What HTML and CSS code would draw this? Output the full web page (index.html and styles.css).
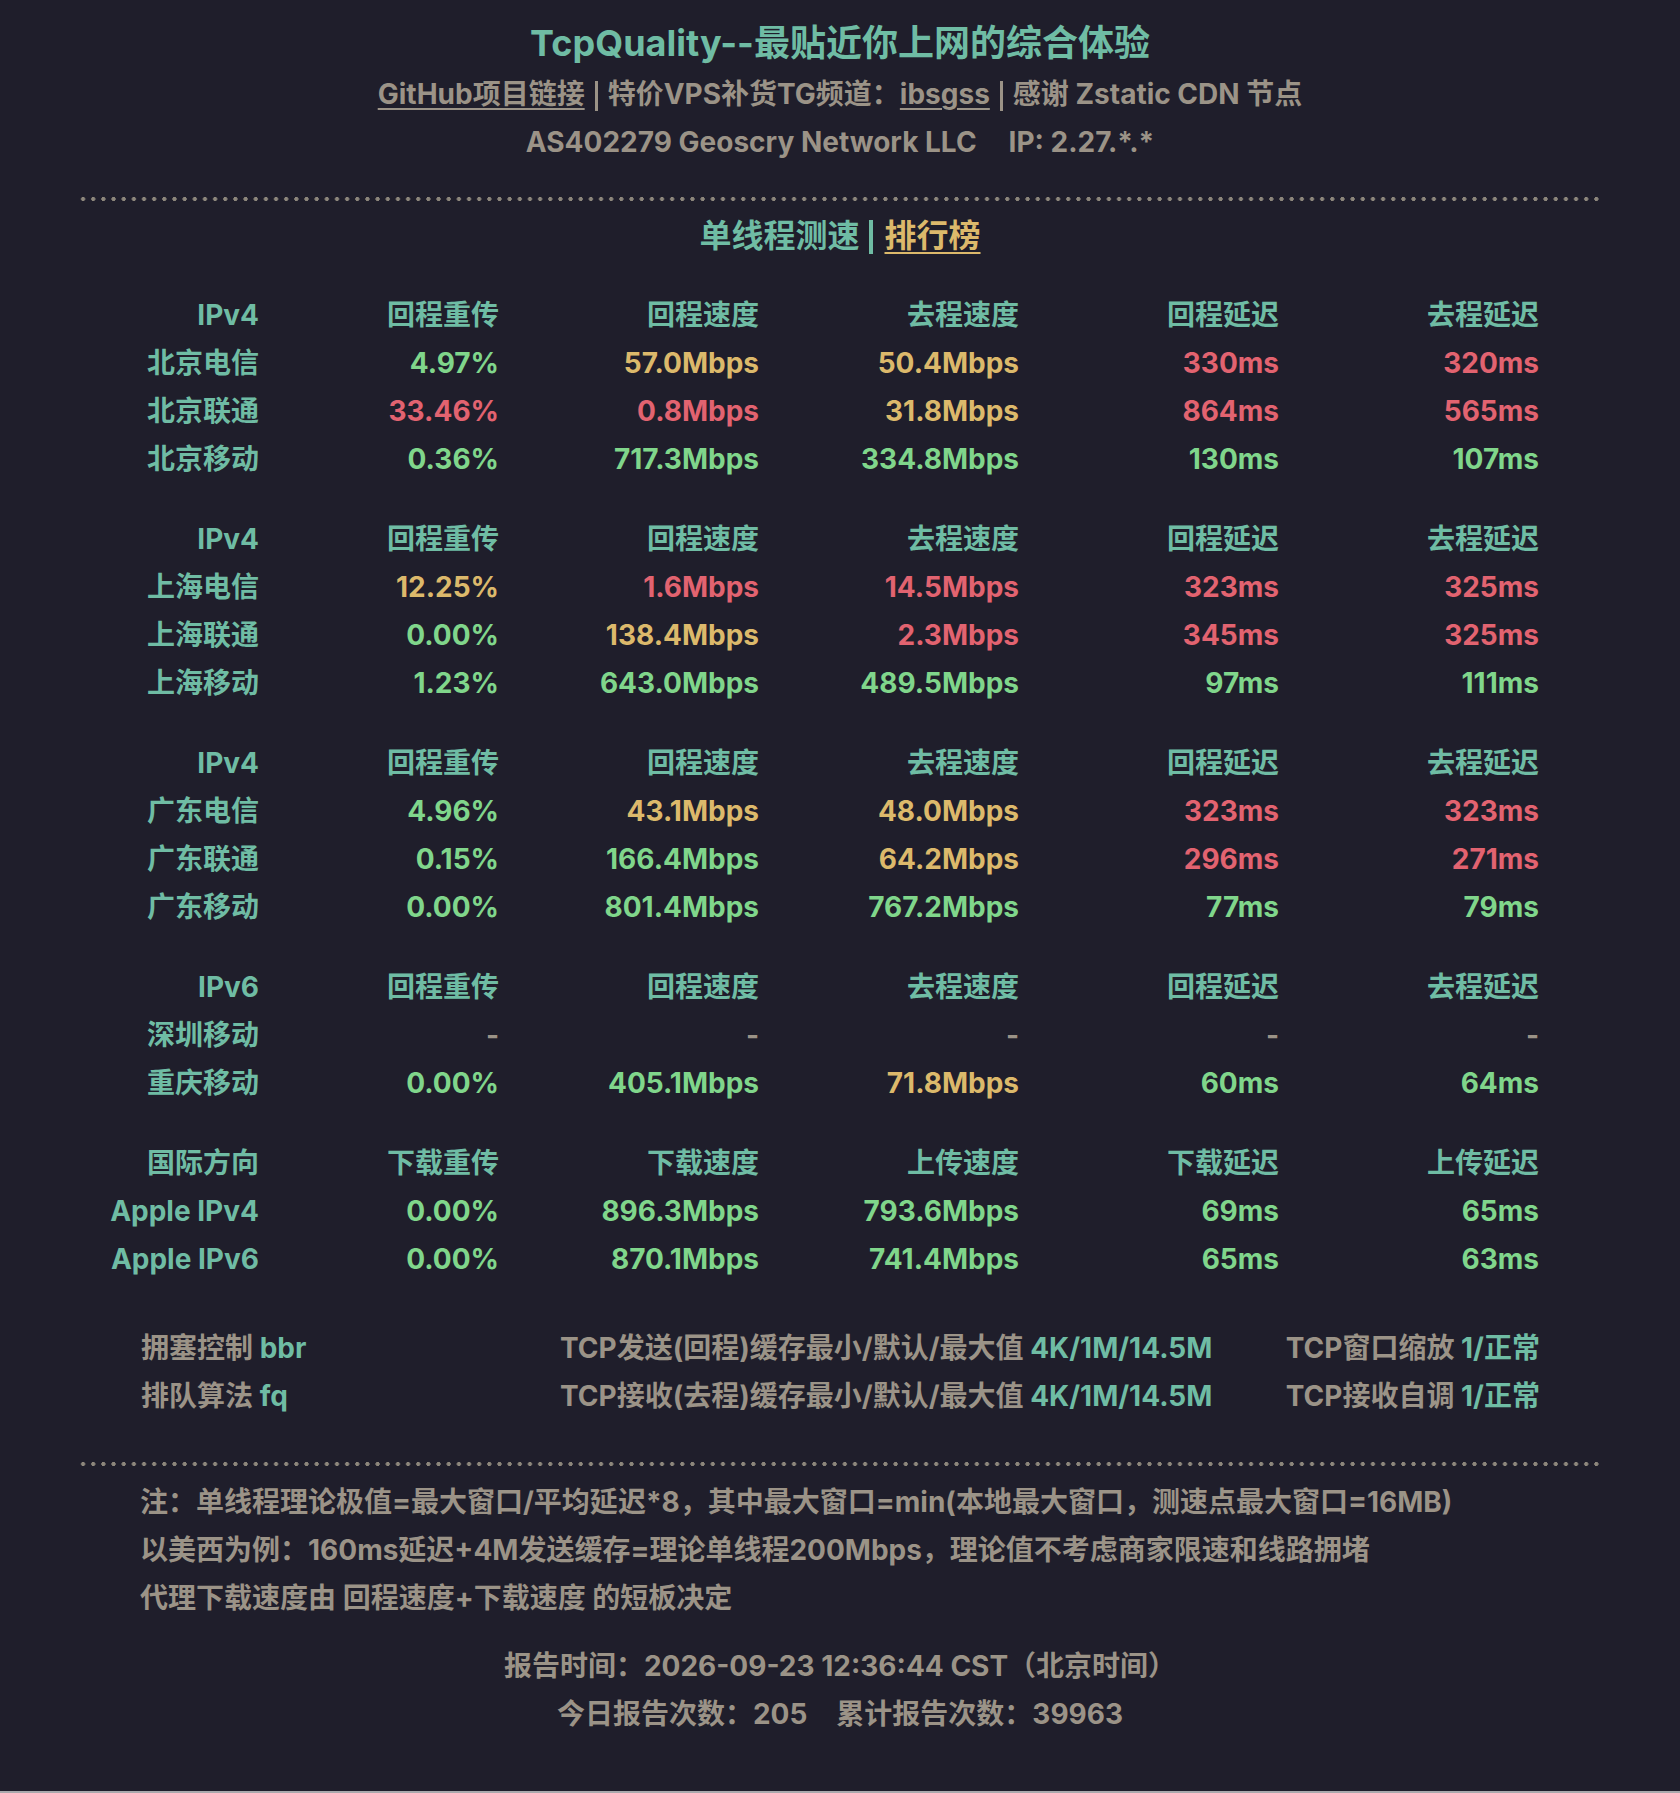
FILE: index.html
```html
<!DOCTYPE html>
<html lang="zh-CN">
<head>
<meta charset="utf-8">
<title>TcpQuality</title>
<link rel="stylesheet" href="styles.css">
</head>
<body>
<div class="page">
  <header class="head">
    <h1 class="title">TcpQuality--最贴近你上网的综合体验</h1>
    <p class="sub"><a class="link" href="#">GitHub项目链接</a><span class="bar"></span>特价VPS补货TG频道：<a class="link" href="#">ibsgss</a><span class="bar"></span>感谢 Zstatic CDN 节点</p>
    <p class="sub">AS402279 Geoscry Network LLC<span class="gap"></span>IP: 2.27.*.*</p>
  </header>

  <div class="dots"></div>

  <div class="tabs"><span>单线程测速</span><span class="tbar"></span><a class="rank" href="#">排行榜</a></div>

  <div class="grid">
    <div class="h">IPv4</div><div class="h">回程重传</div><div class="h">回程速度</div><div class="h">去程速度</div><div class="h">回程延迟</div><div class="h">去程延迟</div>
    <div class="n">北京电信</div><div class="g">4.97%</div><div class="y">57.0Mbps</div><div class="y">50.4Mbps</div><div class="r">330ms</div><div class="r">320ms</div>
    <div class="n">北京联通</div><div class="r">33.46%</div><div class="r">0.8Mbps</div><div class="y">31.8Mbps</div><div class="r">864ms</div><div class="r">565ms</div>
    <div class="n">北京移动</div><div class="g">0.36%</div><div class="g">717.3Mbps</div><div class="g">334.8Mbps</div><div class="g">130ms</div><div class="g">107ms</div>
  </div>

  <div class="grid">
    <div class="h">IPv4</div><div class="h">回程重传</div><div class="h">回程速度</div><div class="h">去程速度</div><div class="h">回程延迟</div><div class="h">去程延迟</div>
    <div class="n">上海电信</div><div class="y">12.25%</div><div class="r">1.6Mbps</div><div class="r">14.5Mbps</div><div class="r">323ms</div><div class="r">325ms</div>
    <div class="n">上海联通</div><div class="g">0.00%</div><div class="y">138.4Mbps</div><div class="r">2.3Mbps</div><div class="r">345ms</div><div class="r">325ms</div>
    <div class="n">上海移动</div><div class="g">1.23%</div><div class="g">643.0Mbps</div><div class="g">489.5Mbps</div><div class="g">97ms</div><div class="g">111ms</div>
  </div>

  <div class="grid">
    <div class="h">IPv4</div><div class="h">回程重传</div><div class="h">回程速度</div><div class="h">去程速度</div><div class="h">回程延迟</div><div class="h">去程延迟</div>
    <div class="n">广东电信</div><div class="g">4.96%</div><div class="y">43.1Mbps</div><div class="y">48.0Mbps</div><div class="r">323ms</div><div class="r">323ms</div>
    <div class="n">广东联通</div><div class="g">0.15%</div><div class="g">166.4Mbps</div><div class="y">64.2Mbps</div><div class="r">296ms</div><div class="r">271ms</div>
    <div class="n">广东移动</div><div class="g">0.00%</div><div class="g">801.4Mbps</div><div class="g">767.2Mbps</div><div class="g">77ms</div><div class="g">79ms</div>
  </div>

  <div class="grid">
    <div class="h">IPv6</div><div class="h">回程重传</div><div class="h">回程速度</div><div class="h">去程速度</div><div class="h">回程延迟</div><div class="h">去程延迟</div>
    <div class="n">深圳移动</div><div class="d">-</div><div class="d">-</div><div class="d">-</div><div class="d">-</div><div class="d">-</div>
    <div class="n">重庆移动</div><div class="g">0.00%</div><div class="g">405.1Mbps</div><div class="y">71.8Mbps</div><div class="g">60ms</div><div class="g">64ms</div>
  </div>

  <div class="grid">
    <div class="h">国际方向</div><div class="h">下载重传</div><div class="h">下载速度</div><div class="h">上传速度</div><div class="h">下载延迟</div><div class="h">上传延迟</div>
    <div class="n">Apple IPv4</div><div class="g">0.00%</div><div class="g">896.3Mbps</div><div class="g">793.6Mbps</div><div class="g">69ms</div><div class="g">65ms</div>
    <div class="n">Apple IPv6</div><div class="g">0.00%</div><div class="g">870.1Mbps</div><div class="g">741.4Mbps</div><div class="g">65ms</div><div class="g">63ms</div>
  </div>

  <div class="info">
    <div>拥塞控制 <span class="v">bbr</span></div>
    <div>TCP发送(回程)缓存最小/默认/最大值 <span class="v">4K/1M/14.5M</span></div>
    <div class="end">TCP窗口缩放 <span class="v">1/正常</span></div>
    <div>排队算法 <span class="v">fq</span></div>
    <div>TCP接收(去程)缓存最小/默认/最大值 <span class="v">4K/1M/14.5M</span></div>
    <div class="end">TCP接收自调 <span class="v">1/正常</span></div>
  </div>

  <div class="dots dots2"></div>

  <div class="notes">
    <p>注：单线程理论极值=最大窗口/平均延迟*8，其中最大窗口=min(本地最大窗口，测速点最大窗口=16MB)</p>
    <p>以美西为例：160ms延迟+4M发送缓存=理论单线程200Mbps，理论值不考虑商家限速和线路拥堵</p>
    <p>代理下载速度由 回程速度+下载速度 的短板决定</p>
  </div>

  <div class="report">
    <p>报告时间：2026-09-23 12:36:44 CST（北京时间）</p>
    <p>今日报告次数：205<span class="gap2"></span>累计报告次数：39963</p>
  </div>
</div>
</body>
</html>
```
FILE: styles.css
```css
html {
  background: #a9a9ad;
}
body {
  margin: 0;
  font-family: "Inter", "Noto Sans CJK SC", sans-serif;
  font-weight: 650;
  color: #9b9387;
}
.page {
  background: #1f1e2b;
  height: 1791px;
  box-sizing: border-box;
  padding: 16px 78px 0;
}
.head {
  text-align: center;
}
.title {
  margin: 0;
  font-size: 36px;
  line-height: 54px;
  font-weight: 650;
  color: #6fbca4;
}
.sub {
  margin: 0;
  font-size: 28px;
  line-height: 48px;
  color: #9b9387;
}
.link {
  color: #9b9387;
  text-decoration: underline;
  text-decoration-thickness: 2px;
  text-underline-offset: 4px;
}
.bar {
  display: inline-block;
  width: 3px;
  height: 30px;
  background: #9b9387;
  margin: 0 10px;
  vertical-align: -7px;
}
.gap {
  display: inline-block;
  width: 32px;
}
.dots {
  margin-top: 31px;
  height: 4px;
  background-image: radial-gradient(circle, #8d877c 1.8px, transparent 2.3px);
  background-size: 10.16px 4px;
  background-position: 0 0;
}
.tabs {
  margin-top: 11px;
  text-align: center;
  font-size: 32px;
  line-height: 48px;
  color: #6fbca4;
}
.tbar {
  display: inline-block;
  width: 4px;
  height: 34px;
  background: #6fbca4;
  margin: 0 12px 0 9px;
  vertical-align: -7px;
}
.rank {
  color: #dcb96b;
  text-decoration: underline;
  text-decoration-thickness: 2px;
  text-underline-offset: 5px;
}
.grid {
  display: grid;
  grid-template-columns: 181px 240px repeat(4, 260px);
  grid-auto-rows: 48px;
  font-size: 28px;
  line-height: 48px;
  text-align: right;
  margin-top: 32px;
}
.tabs + .grid {
  margin-top: 31px;
}
.h, .n {
  color: #6fbca4;
  white-space: nowrap;
}
.g { color: #80d68b; }
.y { color: #dcb96b; }
.r { color: #e26370; }
.d { color: #9b9387; }
.info {
  margin: 41px 0 0 63px;
  display: grid;
  grid-template-columns: 419px 1fr auto;
  grid-auto-rows: 48px;
  font-size: 28px;
  line-height: 48px;
  color: #9b9387;
  width: 1399px;
  white-space: nowrap;
}
.info .end {
  text-align: right;
}
.v {
  color: #6fbca4;
}
.dots2 {
  margin-top: 42px;
}
.notes {
  margin: 12px 0 0 62px;
  font-size: 28px;
  line-height: 48px;
}
.notes p,
.report p {
  margin: 0;
}
.report {
  margin-top: 20px;
  text-align: center;
  font-size: 28px;
  line-height: 48px;
}
.gap2 {
  display: inline-block;
  width: 29px;
}
```
